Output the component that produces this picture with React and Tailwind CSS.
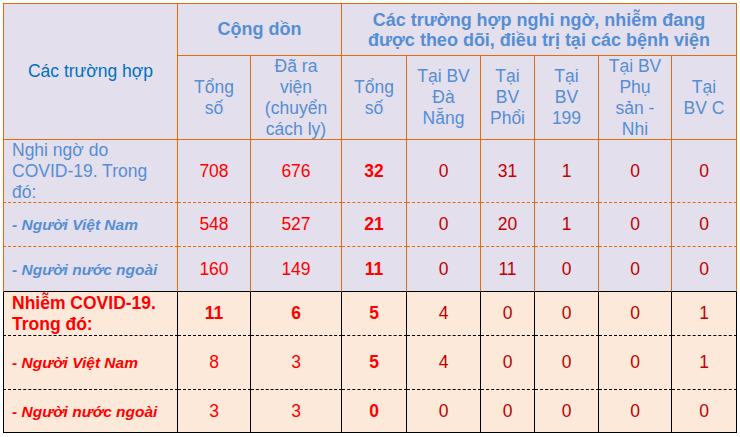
import React from "react";

const O = "border-[#e46c0a]";
const K = "border-black";
const TOP = "bg-[#e4dfec]";
const BOT = "bg-[#fde9d9]";
const DASH = "[border-bottom-style:dashed]!";

function C({ className = "", children }) {
  return (
    <div className={`flex items-center justify-center text-center border-r border-b whitespace-nowrap ${className}`}>
      <div>{children}</div>
    </div>
  );
}

function L({ className = "", children }) {
  return (
    <div className={`flex items-center justify-start text-left border-l border-r border-b pl-[8px] whitespace-nowrap ${className}`}>
      <div>{children}</div>
    </div>
  );
}

const RED = "text-[#ff0000]";
const DRED = "text-[#c00000]";
const BLUE = "text-[#558ed5]";
const ITAL = "font-bold italic text-[15.5px]";

function NumRow({ vals, bc, bg, dashed, boldFirst2 }) {
  const b = `${bc} ${bg} ${dashed ? DASH : ""}`;
  return (
    <>
      <C className={`${b} ${RED} ${boldFirst2 ? "font-bold" : ""}`}>{vals[0]}</C>
      <C className={`${b} ${RED} ${boldFirst2 ? "font-bold" : ""}`}>{vals[1]}</C>
      <C className={`${b} ${RED} font-bold`}>{vals[2]}</C>
      {vals.slice(3).map((v, i) => (
        <C key={i} className={`${b} ${DRED}`}>{v}</C>
      ))}
    </>
  );
}

export default function App() {
  return (
    <div className="w-[740px] h-[437px] bg-white pt-[3px] pl-[3px] font-['Liberation_Sans',Arial,sans-serif] text-[17.5px] leading-[21px]">
      <div className="grid w-[734px] grid-cols-[175px_73px_91px_65px_74px_54px_64px_73px_65px] grid-rows-[53px_84px_63px_44px_45px_44px_54px_43px]">
        {/* header row 1 */}
        <div className={`row-span-2 flex items-center justify-center border-l border-t border-r border-b ${O} ${TOP} text-[#0070c0]`}>
          <div>Các trường hợp</div>
        </div>
        <C className={`col-span-2 border-t ${O} ${TOP} ${BLUE} font-bold text-[18px]`}>Cộng dồn</C>
        <C className={`col-span-6 border-t ${O} ${TOP} ${BLUE} font-bold text-[18px] leading-[20px]`}>
          Các trường hợp nghi ngờ, nhiễm đang<br />được theo dõi, điều trị tại các bệnh viện
        </C>
        {/* header row 2 */}
        <C className={`${O} ${TOP} ${BLUE}`}>Tổng<br />số</C>
        <C className={`${O} ${TOP} ${BLUE}`}>Đã ra<br />viện<br />(chuyển<br />cách ly)</C>
        <C className={`${O} ${TOP} ${BLUE}`}>Tổng<br />số</C>
        <C className={`${O} ${TOP} ${BLUE}`}>Tại BV<br />Đà<br />Nẵng</C>
        <C className={`${O} ${TOP} ${BLUE}`}>Tại<br />BV<br />Phổi</C>
        <C className={`${O} ${TOP} ${BLUE}`}>Tại<br />BV<br />199</C>
        <C className={`${O} ${TOP} ${BLUE}`}>Tại BV<br />Phụ<br />sản -<br />Nhi</C>
        <C className={`${O} ${TOP} ${BLUE}`}>Tại<br />BV C</C>

        {/* body row 1 */}
        <L className={`${O} ${TOP} ${BLUE} ${DASH}`}>Nghi ngờ do<br />COVID-19. Trong<br />đó:</L>
        <NumRow vals={["708", "676", "32", "0", "31", "1", "0", "0"]} bc={O} bg={TOP} dashed />

        {/* body row 2 */}
        <L className={`${O} ${TOP} ${BLUE} ${DASH} ${ITAL}`}>- Người Việt Nam</L>
        <NumRow vals={["548", "527", "21", "0", "20", "1", "0", "0"]} bc={O} bg={TOP} dashed />

        {/* body row 3 */}
        <L className={`${O} [border-bottom-color:#000]! ${TOP} ${BLUE} ${ITAL}`}>- Người nước ngoài</L>
        {["160", "149", "11", "0", "11", "0", "0", "0"].map((v, i) => (
          <C
            key={i}
            className={`${O} [border-bottom-color:#000]! ${TOP} ${i < 2 ? RED : i === 2 ? `${RED} font-bold` : DRED}`}
          >
            {v}
          </C>
        ))}

        {/* lower row 1 */}
        <L className={`${K} ${BOT} ${RED} ${DASH} font-bold`}>Nhiễm COVID-19.<br />Trong đó:</L>
        <NumRow vals={["11", "6", "5", "4", "0", "0", "0", "1"]} bc={K} bg={BOT} dashed boldFirst2 />

        {/* lower row 2 */}
        <L className={`${K} ${BOT} ${RED} ${DASH} ${ITAL}`}>- Người Việt Nam</L>
        <NumRow vals={["8", "3", "5", "4", "0", "0", "0", "1"]} bc={K} bg={BOT} dashed />

        {/* lower row 3 */}
        <L className={`${K} ${BOT} ${RED} ${ITAL}`}>- Người nước ngoài</L>
        <NumRow vals={["3", "3", "0", "0", "0", "0", "0", "0"]} bc={K} bg={BOT} />
      </div>
    </div>
  );
}
